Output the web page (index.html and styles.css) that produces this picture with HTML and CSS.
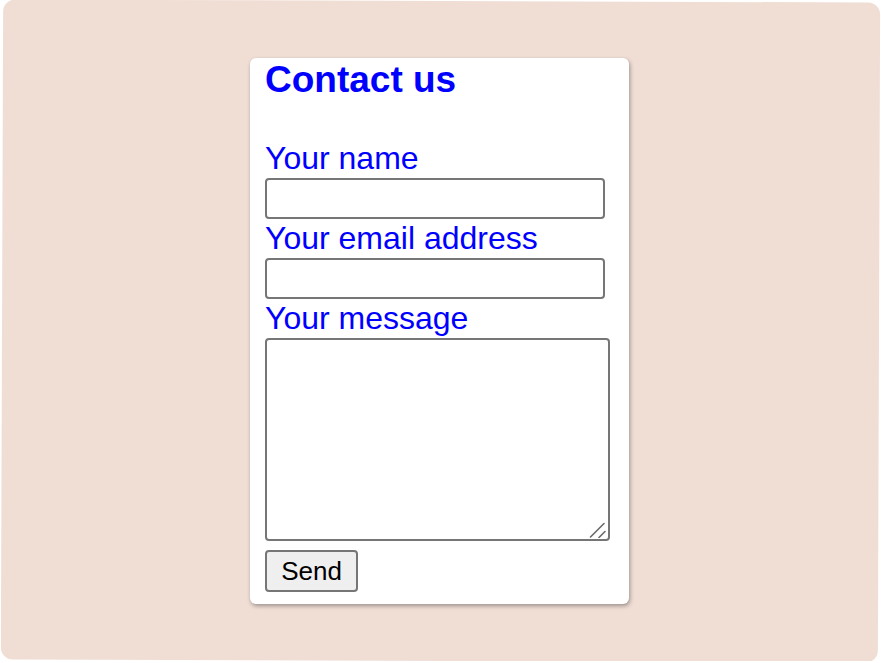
FILE: index.html
```html
<!DOCTYPE html>
<html lang="en">
<head>
<meta charset="utf-8">
<title>Contact us</title>
<link rel="stylesheet" href="styles.css">
</head>
<body>
<div class="stage">
  <form class="card">
    <h1 class="title">Contact us</h1>
    <label class="label" for="name">Your name</label>
    <input class="field" id="name" type="text">
    <label class="label" for="email">Your email address</label>
    <input class="field" id="email" type="email">
    <label class="label" for="msg">Your message</label>
    <div class="area-wrap">
      <textarea class="area" id="msg"></textarea>
      <svg class="grip" width="18" height="16" viewBox="0 0 18 16" aria-hidden="true">
        <path d="M1.5 15 L15 1.5 M10 15.5 L16 9.5" stroke="#6b6b6b" stroke-width="1.6" fill="none" stroke-linecap="round"/>
      </svg>
    </div>
    <button class="send" type="button">Send</button>
  </form>
</div>
</body>
</html>
```
FILE: styles.css
```css
html {
  background: #ffffff;
}
body {
  margin: 0;
  font-family: "Liberation Sans", Arial, sans-serif;
}
.stage {
  box-sizing: border-box;
  width: 877px;
  height: 660px;
  margin: 1px 0 0 2px;
  padding: 57px 2px 0 0;
  background: #f0ded5;
  border-radius: 12px;
  transform: rotate(0.2deg);
  display: flex;
  flex-direction: column;
  align-items: center;
}
.card {
  box-sizing: border-box;
  width: 379px;
  padding: 1px 15px 12px 15px;
  background: #ffffff;
  border-radius: 6px;
  box-shadow: 1px 2px 4px rgba(0, 0, 0, 0.35);
  transform: rotate(-0.2deg);
}
.title {
  margin: 0 0 38px 0;
  font-size: 37px;
  line-height: 42px;
  font-weight: bold;
  color: #0000ff;
}
.label {
  display: block;
  font-size: 32px;
  line-height: 39px;
  color: #0000ff;
}
.field {
  display: block;
  box-sizing: border-box;
  width: 340px;
  height: 41px;
  margin: 0;
  border: 2px solid #767676;
  border-radius: 4px;
  background: #ffffff;
  font-family: "Liberation Sans", Arial, sans-serif;
  font-size: 20px;
}
.area-wrap {
  position: relative;
  width: 345px;
  height: 203px;
}
.area {
  display: block;
  box-sizing: border-box;
  width: 345px;
  height: 203px;
  margin: 0;
  border: 2px solid #767676;
  border-radius: 4px;
  background: #ffffff;
  resize: none;
  font-family: "Liberation Sans", Arial, sans-serif;
  font-size: 20px;
}
.grip {
  position: absolute;
  right: 3px;
  bottom: 3px;
}
.send {
  display: block;
  box-sizing: border-box;
  width: 93px;
  height: 42px;
  margin: 9px 0 0 0;
  padding: 0;
  border: 2px solid #767676;
  border-radius: 4px;
  background: #efefef;
  color: #000000;
  font-family: "Liberation Sans", Arial, sans-serif;
  font-size: 26px;
}
```
